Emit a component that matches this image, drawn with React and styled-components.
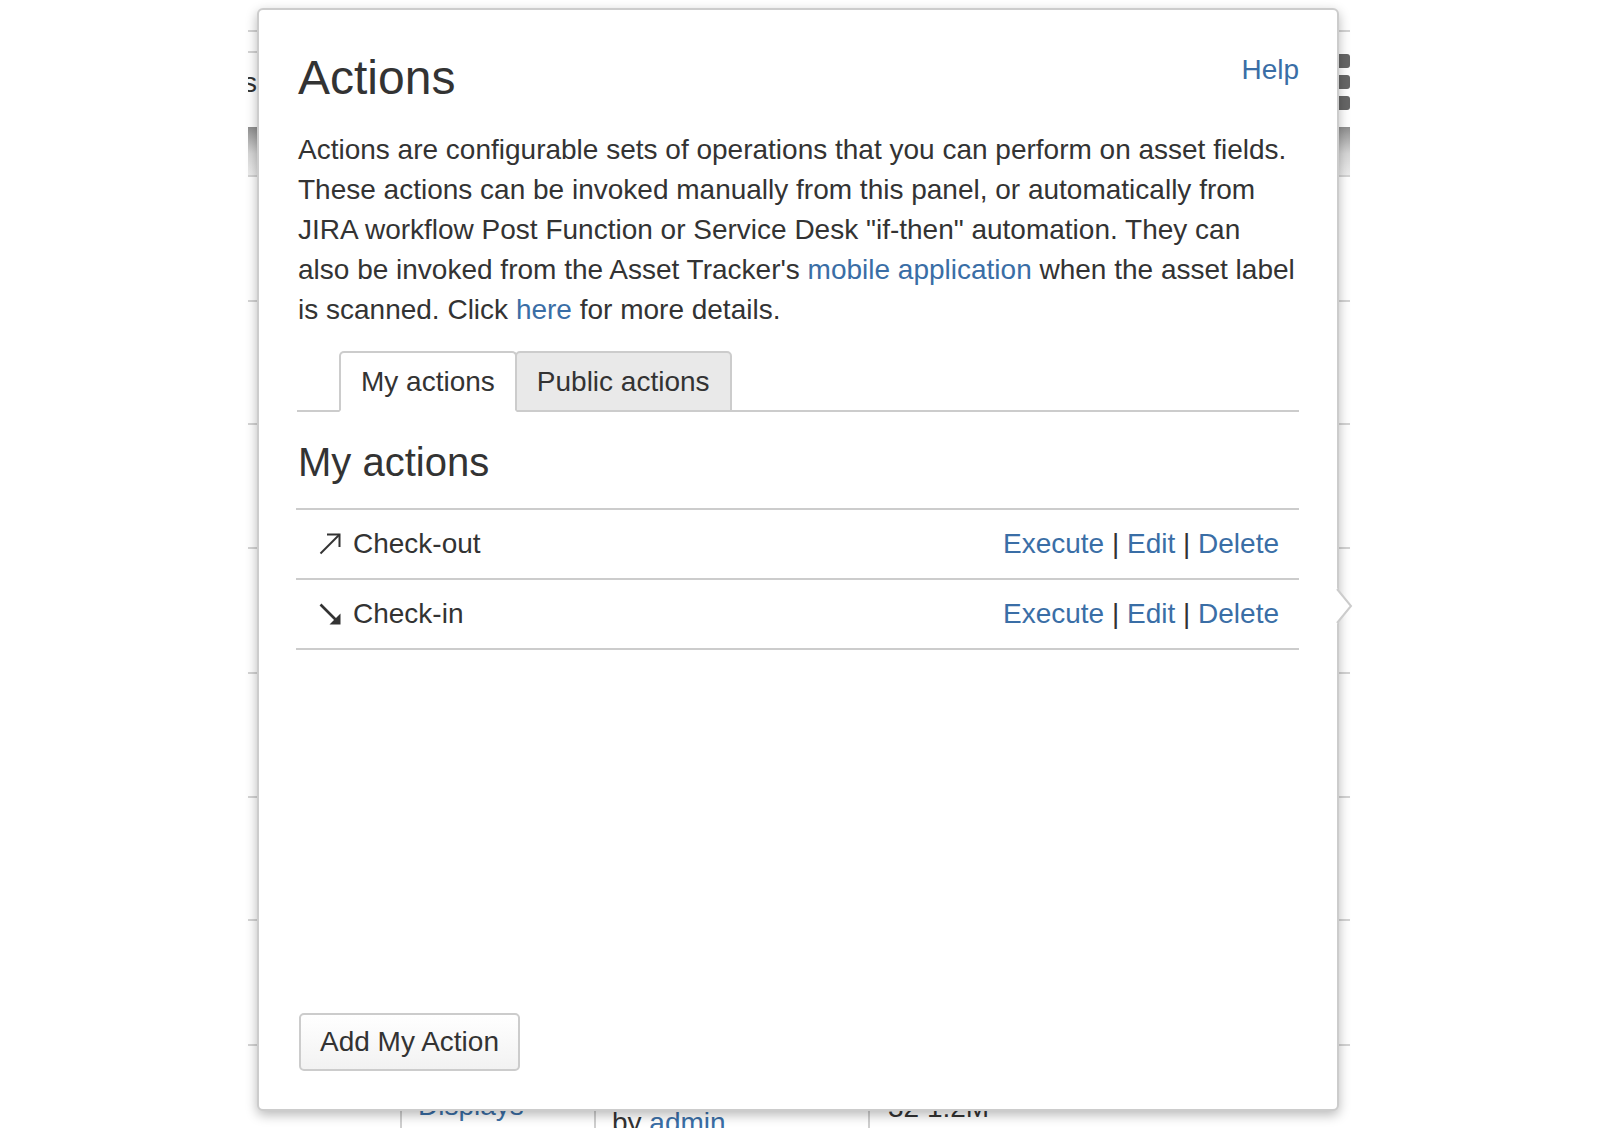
import React from "react";
import styled, { createGlobalStyle } from "styled-components";

const GlobalStyle = createGlobalStyle`
  html, body { margin: 0; padding: 0; background: #fff; }
  body {
    font-family: "Liberation Sans", Arial, Helvetica, sans-serif;
    color: #333;
  }
  * { box-sizing: border-box; }
`;

const LINK = "#3a6ea6";
const LINE = "#cccccc";

const Page = styled.div`
  position: relative;
  width: 1598px;
  height: 1128px;
  overflow: hidden;
  background: #fff;
`;

/* ---------- background page (mostly hidden by the dialog) ---------- */
const Backdrop = styled.div`
  margin-left: 248px;
  width: 1102px;
  display: flex;
  flex-direction: column;
  overflow: hidden;
  font-size: 28px;
  line-height: 40px;
`;

const BgRow = styled.div`
  height: ${(p) => p.$h}px;
  flex: none;
  border-bottom: 2px solid #d4d4d4;
`;

const BgHeaderRow = styled.div`
  height: 95px;
  flex: none;
  display: flex;
  justify-content: space-between;
`;

const LeftStub = styled.div`
  width: 200px;
  display: flex;
  flex-direction: column;
`;

const StubLine = styled.div`
  height: 21px;
  border-bottom: 2px solid #d4d4d4;
`;

const StubLabel = styled.div`
  width: 9px;
  display: flex;
  justify-content: flex-end;
  margin-top: 10px;
  white-space: nowrap;
  color: #333;
`;

const Handle = styled.div`
  display: flex;
  flex-direction: column;
  gap: 7px;
  padding-top: 22px;
`;

const HandleDot = styled.div`
  width: 24px;
  height: 14px;
  border-radius: 3px;
  background: #666;
`;

const GradientBar = styled.div`
  height: 50px;
  flex: none;
  background: linear-gradient(#8f8f8f, #d6d6d6 55%, #ececec);
  border-bottom: 2px solid #d4d4d4;
`;

const BgTableRow = styled.div`
  display: flex;
  height: 100px;
  flex: none;
`;

const BgCell = styled.div`
  width: ${(p) => (p.$w ? `${p.$w}px` : "auto")};
  flex: ${(p) => (p.$w ? "none" : "1")};
  border-left: ${(p) => (p.$first ? "none" : "2px solid #cfcfcf")};
  padding: ${(p) => p.$top || 0}px 0 0 ${(p) => p.$left || 0}px;
  white-space: nowrap;
  color: ${(p) => (p.$link ? LINK : "#333")};
`;

const BgLink = styled.span`
  color: ${LINK};
`;

/* ---------- dialog ---------- */
const Dialog = styled.section`
  position: absolute;
  left: 257px;
  top: 8px;
  width: 1082px;
  height: 1103px;
  background: #fff;
  border: 2px solid ${LINE};
  border-radius: 6px;
  box-shadow: 0 4px 12px rgba(0, 0, 0, 0.28);
  padding: 40px 38px 38px 38px;
  display: flex;
  flex-direction: column;
`;

const Pointer = styled.svg`
  position: absolute;
  right: -16px;
  top: 579px;
  width: 16px;
  height: 34px;
  overflow: visible;
`;

const Header = styled.header`
  display: flex;
  justify-content: space-between;
  align-items: flex-start;
`;

const Title = styled.h1`
  margin: 0 0 0 1px;
  font-size: 48px;
  line-height: 56px;
  font-weight: normal;
  color: #333;
`;

const Link = styled.a`
  color: ${LINK};
  text-decoration: none;
  cursor: pointer;
`;

const HelpLink = styled(Link)`
  font-size: 28px;
  line-height: 40px;
`;

const Intro = styled.p`
  margin: 24px 0 0 1px;
  font-size: 28px;
  line-height: 40px;
  white-space: nowrap;
`;

const TabStrip = styled.nav`
  margin-top: 21px;
  display: flex;
  padding-left: 42px;
  border-bottom: 2px solid ${LINE};
`;

const Tab = styled.div`
  position: relative;
  z-index: ${(p) => (p.$active ? 2 : 1)};
  margin-bottom: -2px;
  margin-left: ${(p) => (p.$first ? 0 : -2)}px;
  padding: 9px 20px 8px;
  font-size: 28px;
  line-height: 40px;
  color: #333;
  background: ${(p) => (p.$active ? "#fff" : "#e9e9e9")};
  border: 2px solid ${LINE};
  border-bottom-color: ${(p) => (p.$active ? "#fff" : LINE)};
  border-radius: 5px 5px 0 0;
`;

const SectionTitle = styled.h2`
  margin: 26px 0 22px 1px;
  font-size: 40px;
  line-height: 48px;
  font-weight: normal;
  color: #333;
`;

const ActionList = styled.div`
  margin-left: -1px;
  border-top: 2px solid ${LINE};
`;

const ActionRow = styled.div`
  display: flex;
  align-items: center;
  justify-content: space-between;
  padding: 14px 20px 14px 23px;
  border-bottom: 2px solid ${LINE};
  font-size: 28px;
  line-height: 40px;
`;

const ActionName = styled.div`
  display: flex;
  align-items: center;
  gap: 12px;
`;

const ArrowIcon = styled.svg`
  width: 22px;
  height: 22px;
  flex: none;
`;

const Ops = styled.span`
  white-space: nowrap;
`;

const Footer = styled.div`
  margin-top: auto;
  display: flex;
`;

const Button = styled.button`
  font-family: inherit;
  font-size: 28px;
  line-height: 40px;
  color: #333;
  padding: 7px 19px;
  margin-left: 2px;
  border: 2px solid ${LINE};
  border-radius: 5px;
  background: linear-gradient(#ffffff, #f2f2f2);
  cursor: pointer;
`;

const OutArrow = () => (
  <ArrowIcon viewBox="0 0 22 22" fill="none" stroke="#333" strokeWidth="2">
    <path d="M1.5 20.5 L20.5 1.5" />
    <path d="M9 1.5 H20.5 V13" strokeLinecap="square" />
  </ArrowIcon>
);

const InArrow = () => (
  <ArrowIcon viewBox="0 0 22 22" fill="none">
    <path d="M1.5 1.5 L17 17" stroke="#333" strokeWidth="2.6" />
    <path d="M21.5 21.5 L21.5 10.5 L10.5 21.5 Z" fill="#333" />
  </ArrowIcon>
);

const actions = [
  { name: "Check-out", icon: <OutArrow /> },
  { name: "Check-in", icon: <InArrow /> },
];

const bgRowHeights = [125, 123, 124, 125, 124, 123, 125];

export default function App() {
  return (
    <Page>
      <GlobalStyle />
      <Backdrop>
        <BgRow $h={32} />
        <BgHeaderRow>
          <LeftStub>
            <StubLine />
            <StubLabel>Details</StubLabel>
          </LeftStub>
          <Handle>
            <HandleDot />
            <HandleDot />
            <HandleDot />
          </Handle>
        </BgHeaderRow>
        <GradientBar />
        {bgRowHeights.map((h, i) => (
          <BgRow key={i} $h={h} />
        ))}
        <BgTableRow>
          <BgCell $w={152} $first />
          <BgCell $w={194} $top={40} $left={16} $link>
            Displays
          </BgCell>
          <BgCell $w={274} $top={57} $left={16}>
            by <BgLink>admin</BgLink>
          </BgCell>
          <BgCell $top={42} $left={18}>
            32 1:2M
          </BgCell>
        </BgTableRow>
      </Backdrop>

      <Dialog>
        <Pointer viewBox="0 0 16 34">
          <polygon points="0,-1 14,17 0,35" fill="#fff" />
          <polyline points="0,0 14,17 0,34" fill="none" stroke={LINE} strokeWidth="2" />
        </Pointer>

        <Header>
          <Title>Actions</Title>
          <HelpLink>Help</HelpLink>
        </Header>

        <Intro>
          Actions are configurable sets of operations that you can perform on asset fields.
          <br />
          These actions can be invoked manually from this panel, or automatically from
          <br />
          JIRA workflow Post Function or Service Desk "if-then" automation. They can
          <br />
          also be invoked from the Asset Tracker's <Link>mobile application</Link> when the asset label
          <br />
          is scanned. Click <Link>here</Link> for more details.
        </Intro>

        <TabStrip>
          <Tab $active $first>My actions</Tab>
          <Tab>Public actions</Tab>
        </TabStrip>

        <SectionTitle>My actions</SectionTitle>

        <ActionList>
          {actions.map((a) => (
            <ActionRow key={a.name}>
              <ActionName>
                {a.icon}
                <span>{a.name}</span>
              </ActionName>
              <Ops>
                <Link>Execute</Link> | <Link>Edit</Link> | <Link>Delete</Link>
              </Ops>
            </ActionRow>
          ))}
        </ActionList>

        <Footer>
          <Button>Add My Action</Button>
        </Footer>
      </Dialog>
    </Page>
  );
}
